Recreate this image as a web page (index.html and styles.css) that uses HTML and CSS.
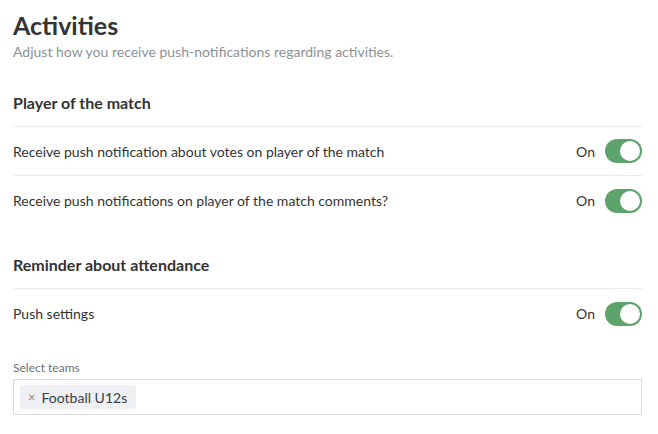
FILE: index.html
```html
<!DOCTYPE html>
<html>
<head>
<meta charset="utf-8">
<link rel="stylesheet" href="styles.css">
</head>
<body>
<div class="page">
  <header class="page-header">
    <h1 class="title">Activities</h1>
    <p class="subtitle">Adjust how you receive push-notifications regarding activities.</p>
  </header>

  <section class="group">
    <h2 class="group-title">Player of the match</h2>
    <div class="row">
      <span class="row-label">Receive push notification about votes on player of the match</span>
      <span class="toggle-wrap"><span class="toggle-text">On</span><span class="toggle"><span class="knob"></span></span></span>
    </div>
    <div class="row last">
      <span class="row-label">Receive push notifications on player of the match comments?</span>
      <span class="toggle-wrap"><span class="toggle-text">On</span><span class="toggle"><span class="knob"></span></span></span>
    </div>
  </section>

  <section class="group">
    <h2 class="group-title">Reminder about attendance</h2>
    <div class="row last">
      <span class="row-label">Push settings</span>
      <span class="toggle-wrap"><span class="toggle-text">On</span><span class="toggle"><span class="knob"></span></span></span>
    </div>
    <div class="field">
      <label class="field-label">Select teams</label>
      <div class="select">
        <span class="chip"><span class="chip-x">×</span>Football U12s</span>
      </div>
    </div>
  </section>
</div>
</body>
</html>
```

FILE: styles.css
```css
* { box-sizing: border-box; }
html, body { margin: 0; padding: 0; background: #fff; }
body {
  font-family: Lato, "Open Sans", Arial, sans-serif;
  color: #333;
}
.page {
  padding: 10px 16px 0 13px;
}
.title {
  margin: 0;
  font-size: 25px;
  line-height: 30px;
  font-weight: 700;
  color: #333;
}
.subtitle {
  margin: 3px 0 0;
  font-size: 14px;
  line-height: 18px;
  color: #8c9196;
}
.group { margin-top: 32px; }
.group + .group { margin-top: 30px; }
.group-title {
  margin: 0;
  font-size: 16px;
  font-weight: 700;
  line-height: 20px;
  padding-bottom: 13px;
  border-bottom: 1px solid #ebebeb;
}
.row {
  display: flex;
  align-items: center;
  justify-content: space-between;
  height: 49px;
  border-bottom: 1px solid #ebebeb;
  font-size: 14px;
}
.row.last { border-bottom: none; }
.toggle-wrap { display: flex; align-items: center; gap: 10px; }
.toggle-text { font-size: 14px; color: #333; }
.toggle {
  width: 37px;
  height: 24px;
  border-radius: 12px;
  background: #5ea36b;
  position: relative;
  display: block;
}
.knob {
  position: absolute;
  top: 2px;
  right: 2px;
  width: 20px;
  height: 20px;
  border-radius: 50%;
  background: #fff;
}
.field { margin-top: 23px; }
.field-label {
  display: block;
  font-size: 12px;
  line-height: 14px;
  color: #6b6f75;
  margin-bottom: 4px;
}
.select {
  height: 36px;
  border: 1px solid #dcdcdc;
  display: flex;
  align-items: center;
  padding: 0 6px;
}
.chip {
  display: inline-flex;
  align-items: center;
  height: 24px;
  padding: 0 9px 0 8px;
  background: #eef0f3;
  border-radius: 3px;
  font-size: 14px;
  color: #3a3f45;
}
.chip-x {
  font-size: 13px;
  color: #888;
  margin-right: 6px;
}
```
